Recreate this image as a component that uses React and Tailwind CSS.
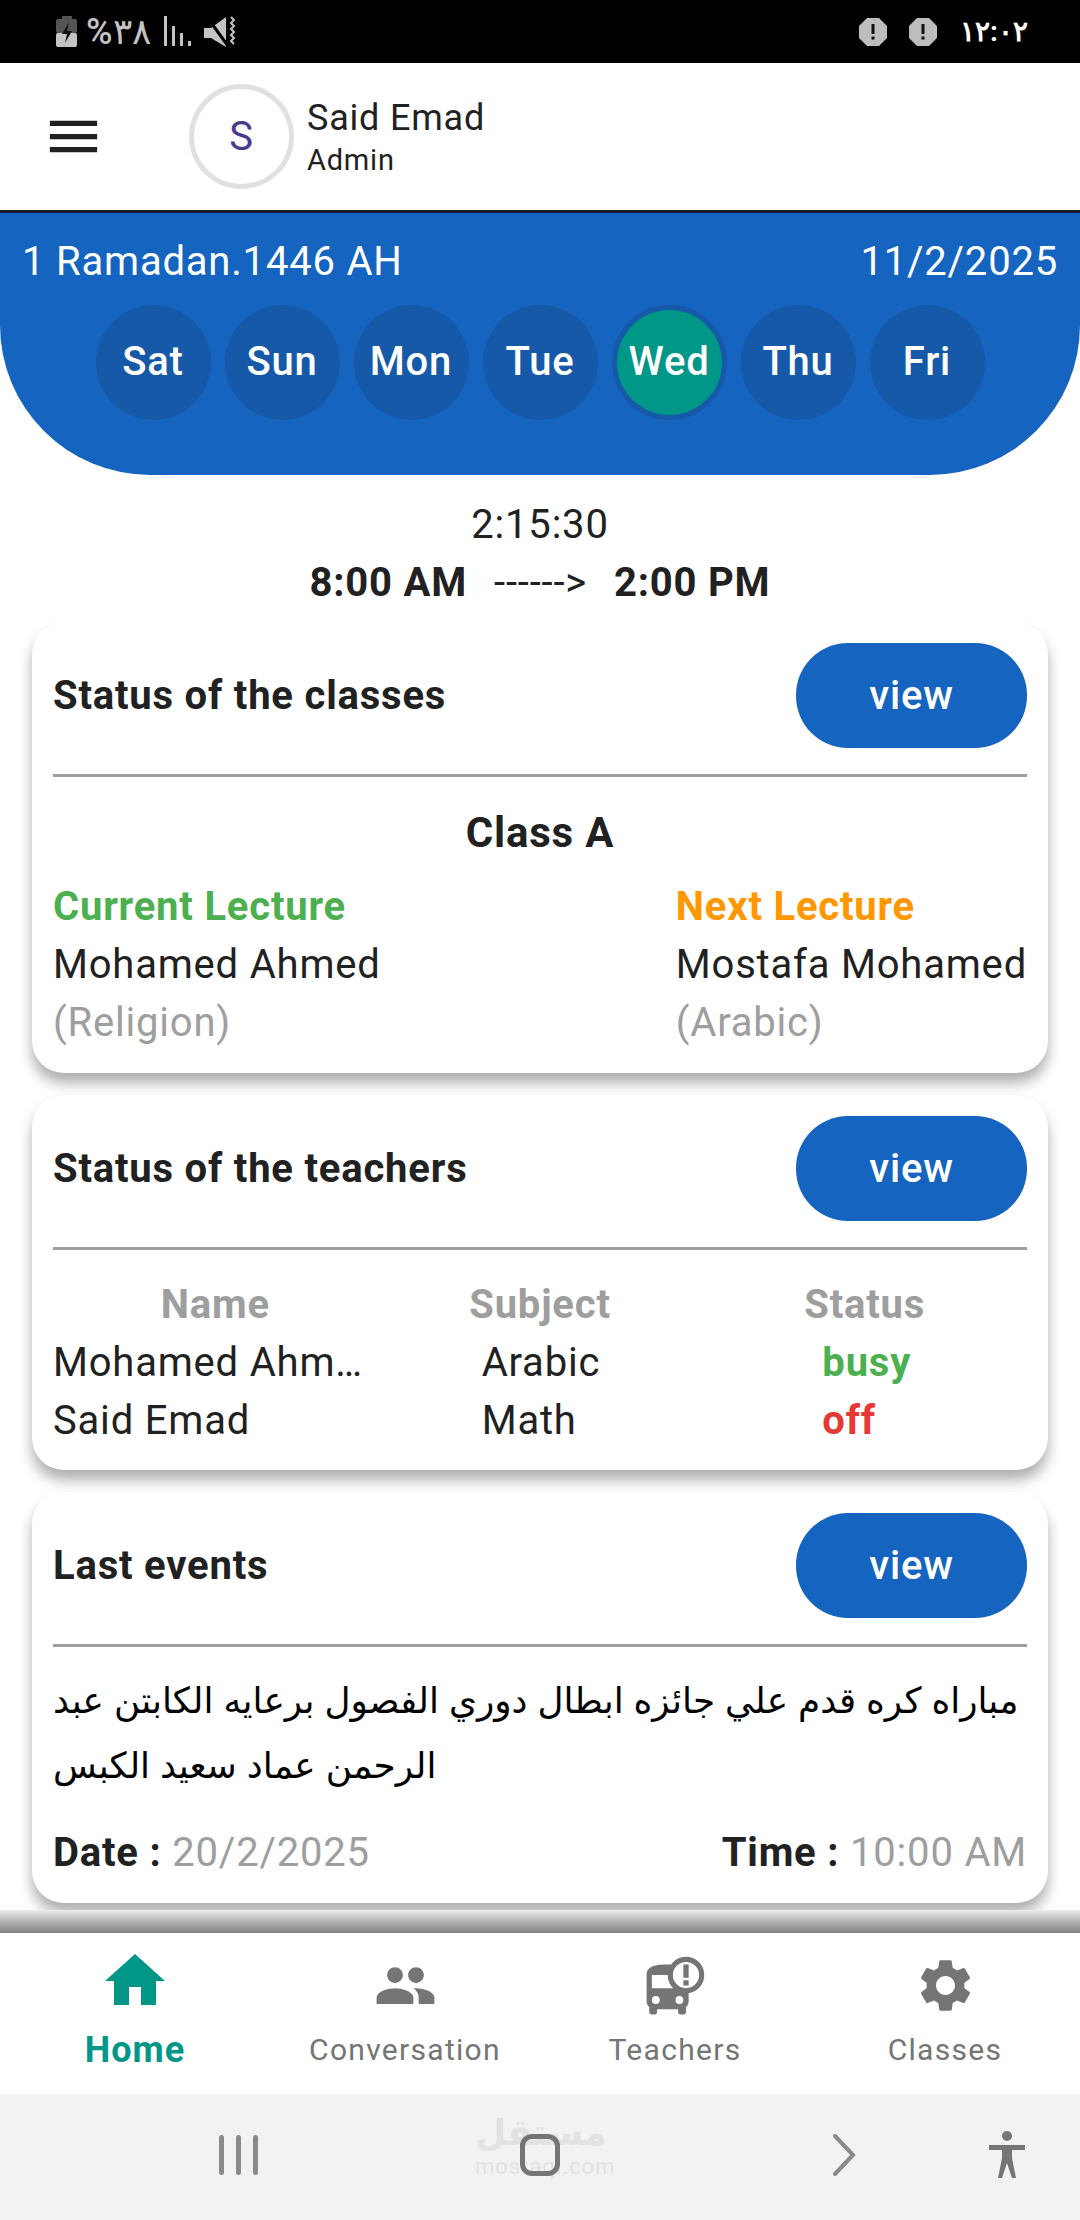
import { MdMenu, MdHome, MdPeople, MdBusAlert, MdSettings } from 'react-icons/md';

const days = ['Sat', 'Sun', 'Mon', 'Tue', 'Wed', 'Thu', 'Fri'];

const tabs = [
  { label: 'Conversation', Icon: MdPeople },
  { label: 'Teachers', Icon: MdBusAlert },
  { label: 'Classes', Icon: MdSettings },
];

const teachers = [
  { name: 'Mohamed Ahmed', subject: 'Arabic', status: 'busy', color: 'text-[#4caf50]' },
  { name: 'Said Emad', subject: 'Math', status: 'off', color: 'text-[#e53935]' },
];

function AlertIcon() {
  return (
    <svg width="28" height="28" viewBox="0 0 28 28">
      <polygon points="8,0 20,0 28,8 28,20 20,28 8,28 0,20 0,8" fill="#bdbdbd" />
      <rect x="12.5" y="6" width="3" height="10" fill="#111" />
      <rect x="12.5" y="18.5" width="3" height="3" fill="#111" />
    </svg>
  );
}

function StatusBar() {
  return (
    <div className="h-[63px] bg-black flex items-center pl-[56px] pr-[56px] shrink-0 tracking-normal">
      <svg width="22" height="32" viewBox="0 0 22 32">
        <rect x="6" y="0" width="10" height="4" fill="#555" />
        <rect x="0" y="3" width="21" height="14" rx="2" fill="#555" />
        <rect x="0" y="17" width="21" height="14" rx="2" fill="#c4c4c4" />
        <path d="M13 6 6 18h5l-2 9 7-12h-5z" fill="#111" />
      </svg>
      <span className="ml-[8px] text-[36px] leading-none font-medium text-[#c4c4c4]">%٣٨</span>
      <svg className="ml-[13px]" width="28" height="32" viewBox="0 0 28 32">
        <rect x="0" y="0" width="3" height="30" fill="#c4c4c4" />
        <rect x="8" y="10" width="3" height="20" fill="#c4c4c4" />
        <rect x="16" y="17" width="3" height="13" fill="#c4c4c4" />
        <rect x="24" y="25" width="3" height="5" fill="#c4c4c4" />
      </svg>
      <svg className="ml-[12px]" width="32" height="32" viewBox="0 0 32 32">
        <path d="M0 12h7L22 1v30L7 22H0z" fill="#c4c4c4" />
        <path d="M3 1l21 29" fill="none" stroke="#000" strokeWidth="3" />
        <path d="M27 1l3 3-3 3 3 3-3 3 3 3-3 3 3 3-3 3 3 3" fill="none" stroke="#c4c4c4" strokeWidth="2" />
      </svg>
      <div className="ml-auto flex items-center">
        <AlertIcon />
        <div className="ml-[22px]"><AlertIcon /></div>
        <span className="ml-[23px] w-[64px] text-[28px] leading-none font-bold text-white text-center">١٢:٠٢</span>
      </div>
    </div>
  );
}

function CardHeader({ title }) {
  return (
    <div className="flex items-center justify-between h-[105px] mb-[27px] relative">
      <h3 className="text-[40px] font-bold text-[#212121]">{title}</h3>
      <button className="w-[231px] h-[105px] rounded-[52px] bg-[#1565c0] text-white text-[40px] font-medium">view</button>
      <div className="absolute left-0 right-0 -bottom-[29px] h-[3px] bg-[#9e9e9e]" />
    </div>
  );
}

function Card({ title, className, children }) {
  return (
    <section className={`bg-white rounded-[32px] mx-[32px] px-[21px] pt-[21px] shadow-[0_10px_14px_rgba(0,0,0,0.32)] ${className}`}>
      <CardHeader title={title} />
      {children}
    </section>
  );
}

export default function App() {
  return (
    <div className="w-[1080px] h-[2220px] overflow-hidden flex flex-col bg-white text-[#212121] tracking-[0.8px] font-['Roboto',sans-serif]">
      <StatusBar />

      <header className="h-[150px] shrink-0 border-b-[3px] border-[#0d1b2e] flex items-center pl-[42px]">
        <MdMenu size={63} color="#212121" />
        <div className="ml-[84px] w-[105px] h-[105px] rounded-full border-[5px] border-[#e0e0e0] flex items-center justify-center text-[40px] text-[#4a3a8e]">S</div>
        <div className="ml-[13px] mt-[3px]">
          <div className="text-[36px] leading-[44px]">Said Emad</div>
          <div className="text-[29px] leading-[40px]">Admin</div>
        </div>
      </header>

      <div className="h-[262px] shrink-0 bg-[#1565c0] rounded-b-[150px] text-white pt-[20px]">
        <div className="flex justify-between px-[22px] text-[40px] leading-[58px]">
          <span>1 Ramadan.1446 AH</span>
          <span>11/2/2025</span>
        </div>
        <div className="flex justify-center gap-[14px] mt-[14px]">
          {days.map((day) => (
            <div
              key={day}
              className={`w-[115px] h-[115px] rounded-full flex items-center justify-center text-[40px] leading-[56px] pb-[2px] font-medium ${day === 'Wed' ? 'bg-[#009688] border-[5px] border-[#1559a8]' : 'bg-[#1559a8]'}`}
            >
              {day}
            </div>
          ))}
        </div>
      </div>

      <div className="h-[147px] shrink-0 pt-[25px] text-center">
        <div className="text-[40px] leading-[50px]">2:15:30</div>
        <div className="mt-[8px] flex justify-center items-center text-[40px] leading-[50px] font-bold">
          <span>8:00 AM</span>
          <span className="mx-[27px] font-normal">------&gt;</span>
          <span>2:00 PM</span>
        </div>
      </div>

      <main className="h-[1288px] shrink-0 overflow-hidden flex flex-col gap-[22px]">
        <Card title="Status of the classes" className="h-[451px] shrink-0">
          <h2 className="text-center text-[42px] leading-[50px] font-bold mt-[60px]">Class A</h2>
          <div className="flex justify-between mt-[20px] text-[40px] leading-[58px]">
            <div>
              <div className="font-bold text-[#4caf50]">Current Lecture</div>
              <div>Mohamed Ahmed</div>
              <div className="text-[#9e9e9e]">(Religion)</div>
            </div>
            <div>
              <div className="font-bold text-[#ff9800]">Next Lecture</div>
              <div>Mostafa Mohamed</div>
              <div className="text-[#9e9e9e]">(Arabic)</div>
            </div>
          </div>
        </Card>

        <Card title="Status of the teachers" className="h-[375px] shrink-0">
          <div className="grid grid-cols-3 mt-[55px] text-[40px] leading-[58px] font-bold text-[#9e9e9e] text-center">
            <div>Name</div>
            <div>Subject</div>
            <div>Status</div>
          </div>
          {teachers.map((t) => (
            <div key={t.name} className="grid grid-cols-3 text-[40px] leading-[58px]">
              <div className="w-[312px] truncate">{t.name}</div>
              <div className="pl-[104px]">{t.subject}</div>
              <div className={`pl-[120px] font-bold ${t.color}`}>{t.status}</div>
            </div>
          ))}
        </Card>

        <Card title="Last events" className="h-[411px] shrink-0">
          <p className="mt-[51px] text-[35.8px] leading-[65px] tracking-normal text-black text-left font-['Liberation_Sans','DejaVu_Sans',sans-serif]">
            مباراه كره قدم علي جائزه ابطال دوري الفصول برعايه الكابتن عبد الرحمن عماد سعيد الكبس
          </p>
          <div className="flex justify-between mt-[29px] text-[40px] leading-[50px] text-[#9e9e9e]">
            <div><span className="font-bold text-[#212121]">Date : </span>20/2/2025</div>
            <div><span className="font-bold text-[#212121]">Time : </span>10:00 AM</div>
          </div>
        </Card>
      </main>

      <div className="h-[23px] shrink-0 bg-gradient-to-b from-[#ececec] to-[#808080]" />

      <nav className="h-[161px] shrink-0 grid grid-cols-4 text-[#757575]">
        <div className="flex flex-col items-center text-[#009688]">
          <MdHome size={72} className="mt-[12px]" />
          <span className="text-[36px] leading-[40px] font-bold tracking-[1px] mt-[13px]">Home</span>
        </div>
        {tabs.map(({ label, Icon }) => (
          <div key={label} className="flex flex-col items-center">
            <Icon size={63} className="mt-[21px]" />
            <span className="text-[30px] leading-[40px] tracking-[1.3px] mt-[13px]">{label}</span>
          </div>
        ))}
      </nav>

      <div className="flex-1 bg-[#f2f2f2] relative flex items-center pb-[4px] tracking-normal">
        <div className="absolute left-[475px] top-[18px] w-[130px] text-center text-[#e2e2e2] font-bold">
          <div className="text-[36px] leading-[42px] font-['DejaVu_Sans',sans-serif]">مستقل</div>
          <div className="text-[22px] leading-[26px] tracking-[1px] font-normal">mostaql.com</div>
        </div>
        <div className="ml-[219px] flex gap-[12px]">
          <div className="w-[5px] h-[40px] rounded-full bg-[#8a8a8a]" />
          <div className="w-[5px] h-[40px] rounded-full bg-[#8a8a8a]" />
          <div className="w-[5px] h-[40px] rounded-full bg-[#8a8a8a]" />
        </div>
        <div className="relative ml-[262px] w-[40px] h-[42px] rounded-[12px] border-[5px] border-[#757575]" />
        <svg className="relative ml-[272px]" width="24" height="42" viewBox="0 0 24 42">
          <path d="M3 2l18 19L3 40" fill="none" stroke="#8a8a8a" strokeWidth="4" strokeLinecap="round" />
        </svg>
        <svg className="ml-[131px]" width="40" height="48" viewBox="0 0 40 48">
          <circle cx="20" cy="5" r="5" fill="#757575" />
          <path d="M2 14h36v5H25v8l4 20h-4l-5-15-5 15h-4l4-20v-8H2z" fill="#757575" />
        </svg>
      </div>
    </div>
  );
}
